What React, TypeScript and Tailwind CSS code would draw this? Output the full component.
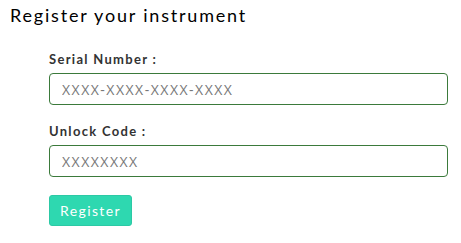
export default function App() {
  return (
    <div className="w-[461px] h-[243px] bg-white font-['Lato',sans-serif] text-black">
      <h1 className="pl-[10px] pt-[4px] text-[18px] leading-[22px] tracking-[0.1em] font-normal">
        Register your instrument
      </h1>
      <form className="pl-[49px] pr-[13px] pt-[25px]">
        <label className="block text-[13px] leading-[16px] font-bold tracking-[0.1em] text-[#333]">
          Serial Number :
        </label>
        <input
          className="mt-[6px] block w-full h-[32px] border border-[#3b7a3b] rounded-[4px] px-[12px] text-[14px] tracking-[1.5px] font-['Open_Sans',sans-serif] placeholder:text-[#777] outline-none"
          placeholder="XXXX-XXXX-XXXX-XXXX"
        />
        <label className="block mt-[18px] text-[13px] leading-[16px] font-bold tracking-[0.1em] text-[#333]">
          Unlock Code :
        </label>
        <input
          className="mt-[6px] block w-full h-[32px] border border-[#3b7a3b] rounded-[4px] px-[12px] text-[14px] tracking-[1.5px] font-['Open_Sans',sans-serif] placeholder:text-[#777] outline-none"
          placeholder="XXXXXXXX"
        />
        <button
          type="button"
          className="mt-[18px] w-[83px] h-[31px] rounded-[3px] bg-[#2ed8b0] border border-[#2cc9a5] text-white text-[14px] tracking-[0.1em]"
        >
          Register
        </button>
      </form>
    </div>
  );
}
